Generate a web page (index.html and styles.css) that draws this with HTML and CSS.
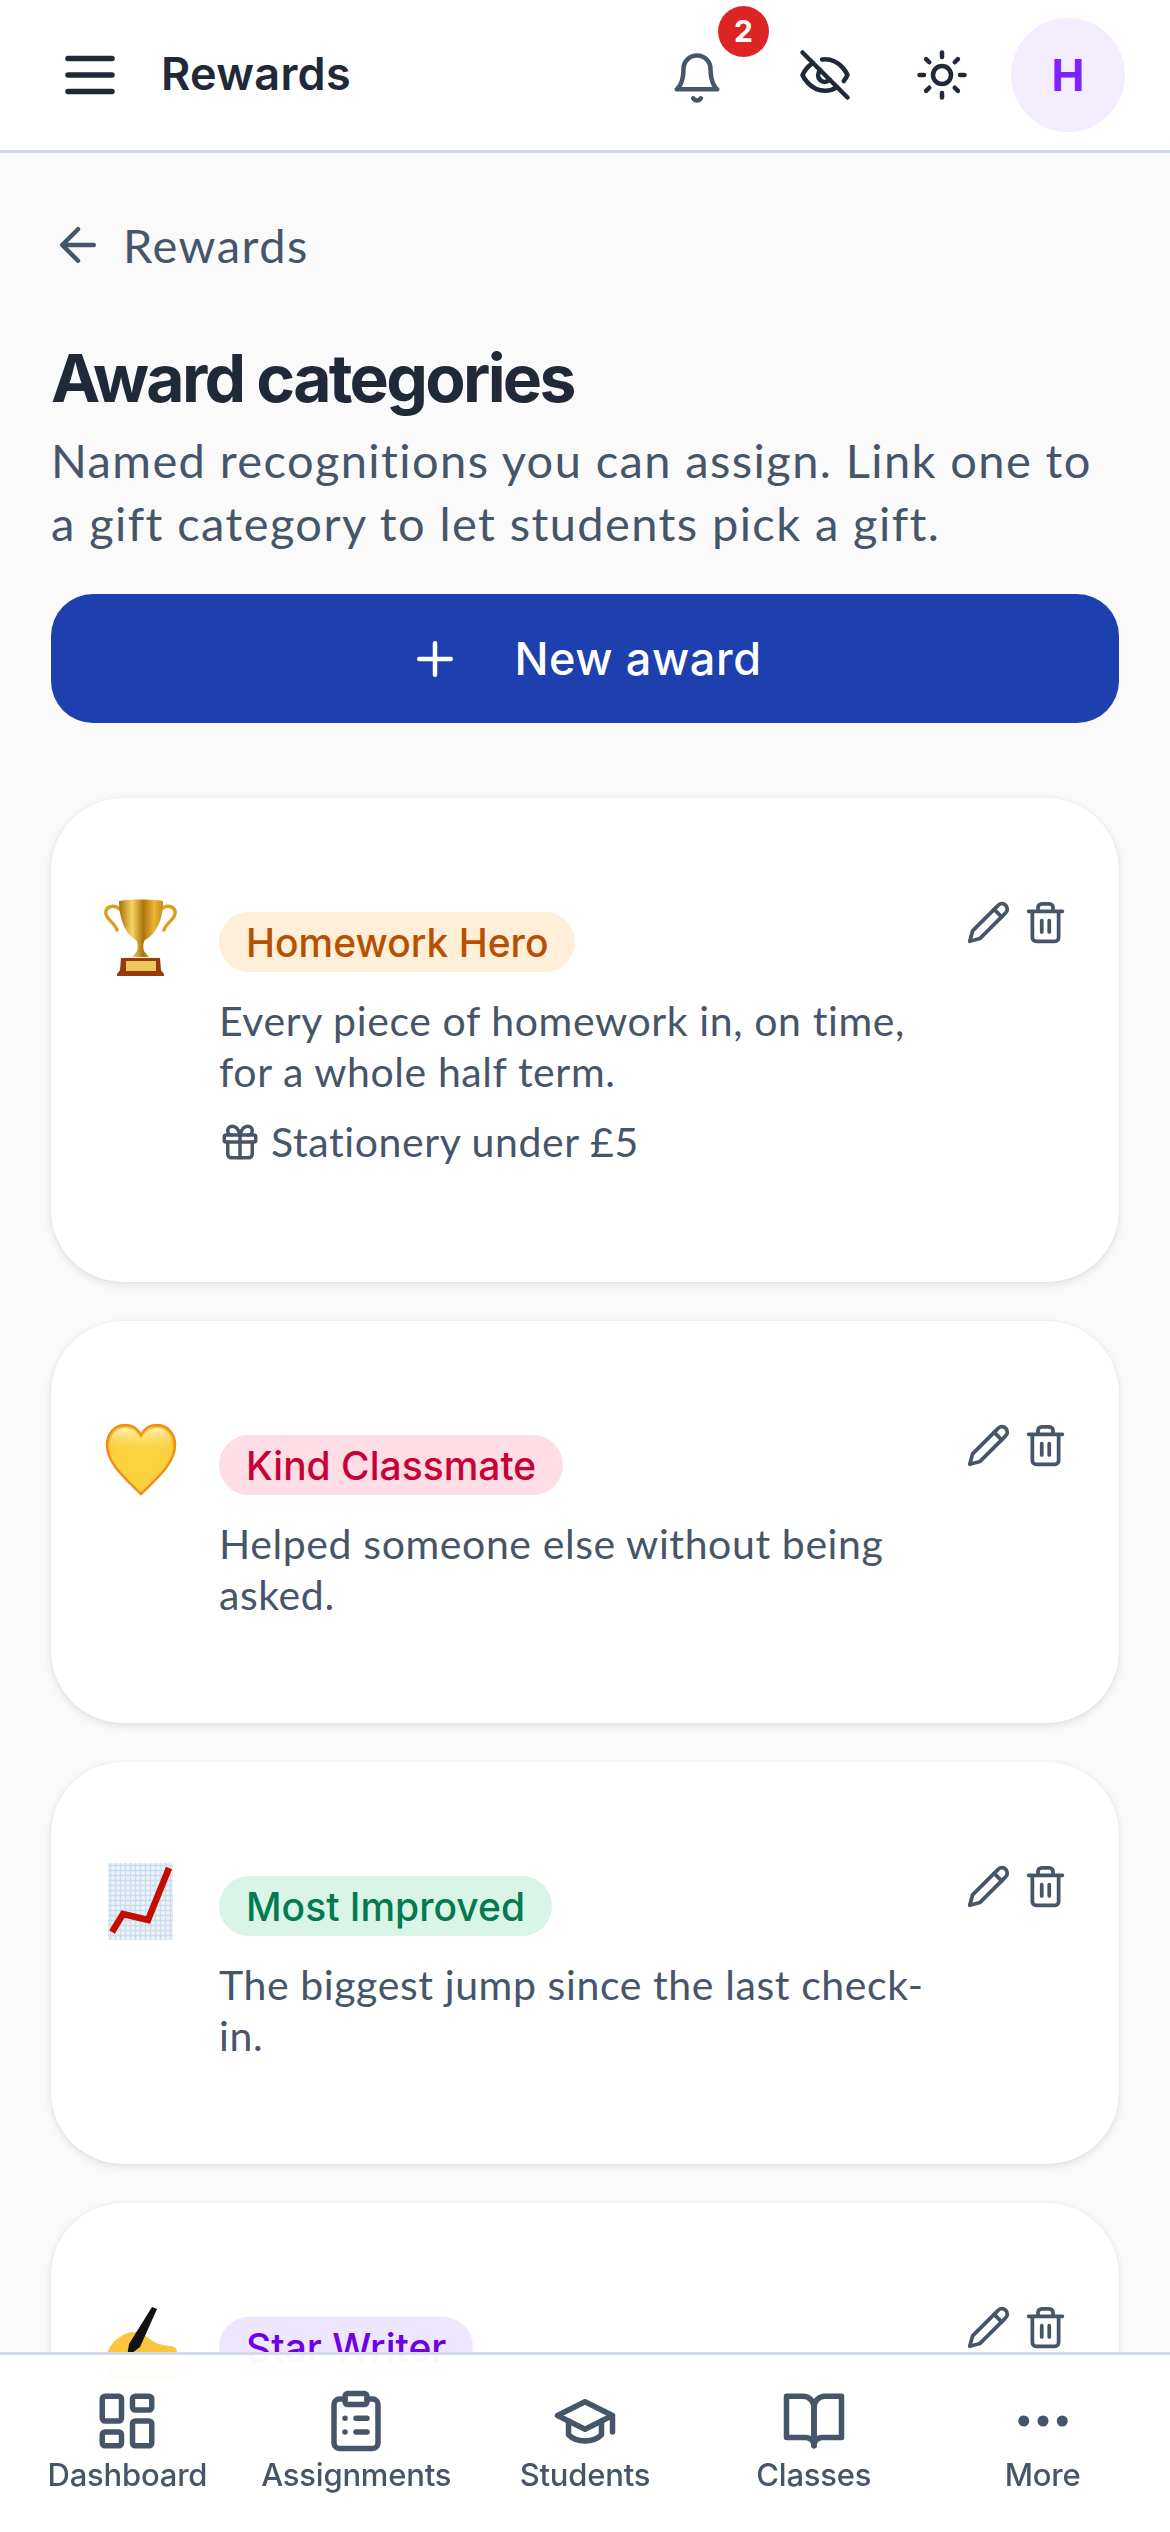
FILE: index.html
```html
<!DOCTYPE html>
<html lang="en">

<head>
    <meta charset="UTF-8">
    <meta name="viewport" content="width=device-width, initial-scale=1.0">
    <title>Award categories</title>
    <link rel="stylesheet" href="styles.css">
</head>

<body>

    <!-- Top bar -->
    <header class="topbar">
        <svg class="icon icon-menu" viewBox="0 0 24 24"><path d="M4 6h16M4 12h16M4 18h16"/></svg>
        <h1 class="topbar-title">Rewards</h1>
        <div class="bell">
            <svg class="icon icon-top" viewBox="0 0 24 24"><path d="M6 8a6 6 0 0 1 12 0c0 7 3 9 3 9H3s3-2 3-9"/><path d="M10.3 21a1.94 1.94 0 0 0 3.4 0"/></svg>
            <span class="badge">2</span>
        </div>
        <svg class="icon icon-top icon-dark eye" viewBox="0 0 24 24"><path d="M9.88 9.88a3 3 0 1 0 4.24 4.24"/><path d="M10.73 5.08A10.43 10.43 0 0 1 12 5c7 0 10 7 10 7a13.16 13.16 0 0 1-1.67 2.68"/><path d="M6.61 6.61A13.526 13.526 0 0 0 2 12s3 7 10 7a9.74 9.74 0 0 0 5.39-1.61"/><path d="M2 2l20 20"/></svg>
        <svg class="icon icon-top icon-dark sun" viewBox="0 0 24 24"><circle cx="12" cy="12" r="4"/><path d="M12 2v2M12 20v2M4.93 4.93l1.41 1.41M17.66 17.66l1.41 1.41M2 12h2M20 12h2M6.34 17.66l-1.41 1.41M19.07 4.93l-1.41 1.41"/></svg>
        <div class="avatar">H</div>
    </header>

    <main class="page">
        <a class="back" href="#">
            <svg class="icon icon-back" viewBox="0 0 24 24"><path d="M19 12H5M12 19l-7-7 7-7"/></svg>
            Rewards
        </a>

        <h2 class="page-title">Award categories</h2>
        <p class="page-sub">Named recognitions you can assign. Link one to<br>a gift category to let students pick a gift.</p>

        <button class="new-btn">
            <svg class="icon icon-plus" viewBox="0 0 24 24"><path d="M5 12h14M12 5v14"/></svg>
            New award
        </button>

        <!-- Homework Hero -->
        <section class="card">
            <div class="emoji">
                <svg viewBox="0 0 73 77" width="73" height="77">
                    <defs>
                        <linearGradient id="gold" x1="0" x2="1" y1="0" y2="0">
                            <stop offset="0" stop-color="#a86f0c"/>
                            <stop offset="0.3" stop-color="#f7d560"/>
                            <stop offset="0.55" stop-color="#a9740c"/>
                            <stop offset="0.8" stop-color="#e9b535"/>
                            <stop offset="1" stop-color="#c58d16"/>
                        </linearGradient>
                    </defs>
                    <path d="M17 11C9 4 1 8 2 15c1 6 9 9 11 16M56 11c8-7 16-3 15 4-1 6-9 9-11 16" fill="none" stroke="#d9a024" stroke-width="3.5" stroke-linecap="round"/>
                    <path d="M15 2c12-2 31-2 44 0 0 16-5 32-18 39-2 2-2 8-1 11l5 6H28l5-6c1-3 1-9-1-11C20 34 15 18 15 2z" fill="url(#gold)"/>
                    <path d="M17 59h39l1 12 3 4v2H13v-2l3-4z" fill="#96390b"/>
                    <rect x="22" y="62" width="30" height="10" fill="#eec85a"/>
                </svg>
            </div>
            <div class="card-body">
                <span class="tag tag-orange">Homework Hero</span>
                <p class="desc">Every piece of homework in, on time,<br>for a whole half term.</p>
                <div class="gift">
                    <svg class="icon icon-gift" viewBox="0 0 24 24"><rect x="3" y="8" width="18" height="4" rx="1"/><path d="M12 8v13"/><path d="M19 12v7a2 2 0 0 1-2 2H7a2 2 0 0 1-2-2v-7"/><path d="M7.5 8a2.5 2.5 0 0 1 0-5A4.8 8 0 0 1 12 8a4.8 8 0 0 1 4.5-5 2.5 2.5 0 0 1 0 5"/></svg>
                    Stationery under £5
                </div>
            </div>
            <div class="actions">
                <svg class="icon icon-action" viewBox="0 0 24 24"><path d="M17 3a2.85 2.83 0 1 1 4 4L7.5 20.5 2 22l1.5-5.5Z"/><path d="M15 5l4 4"/></svg>
                <svg class="icon icon-action" viewBox="0 0 24 24"><path d="M3 6h18M19 6v14a2 2 0 0 1-2 2H7a2 2 0 0 1-2-2V6M8 6V4a2 2 0 0 1 2-2h4a2 2 0 0 1 2 2v2M10 11v6M14 11v6"/></svg>
            </div>
        </section>

        <!-- Kind Classmate -->
        <section class="card">
            <div class="emoji">
                <svg viewBox="0 0 72 72" width="72" height="72">
                    <defs>
                        <radialGradient id="heart" cx="0.5" cy="0.5" r="0.62">
                            <stop offset="0" stop-color="#fcd53f"/>
                            <stop offset="0.65" stop-color="#fbd03c"/>
                            <stop offset="1" stop-color="#f7b52a"/>
                        </radialGradient>
                        <linearGradient id="shine" x1="0" x2="0" y1="0" y2="1">
                            <stop offset="0" stop-color="#fff2b5"/>
                            <stop offset="1" stop-color="#fcd53f" stop-opacity="0"/>
                        </linearGradient>
                    </defs>
                    <path d="M36 70C22 56 2 40 2 21 2 9 10 1 20 1c7 0 13 4 16 10C39 5 45 1 52 1c10 0 18 8 18 20 0 19-20 35-34 49z" fill="url(#heart)" stroke="#ef8f1a" stroke-width="2.5"/>
                    <path d="M36 15C33 9 27 4 20 4 11 4 5 11 5 21c0 3 1 6 2 9h58c1-3 2-6 2-9 0-10-6-17-15-17-7 0-13 5-16 11z" fill="url(#shine)"/>
                </svg>
            </div>
            <div class="card-body">
                <span class="tag tag-pink">Kind Classmate</span>
                <p class="desc">Helped someone else without being<br>asked.</p>
            </div>
            <div class="actions">
                <svg class="icon icon-action" viewBox="0 0 24 24"><path d="M17 3a2.85 2.83 0 1 1 4 4L7.5 20.5 2 22l1.5-5.5Z"/><path d="M15 5l4 4"/></svg>
                <svg class="icon icon-action" viewBox="0 0 24 24"><path d="M3 6h18M19 6v14a2 2 0 0 1-2 2H7a2 2 0 0 1-2-2V6M8 6V4a2 2 0 0 1 2-2h4a2 2 0 0 1 2 2v2M10 11v6M14 11v6"/></svg>
            </div>
        </section>

        <!-- Most Improved -->
        <section class="card">
            <div class="emoji">
                <svg viewBox="0 0 65 77" width="65" height="77">
                    <defs>
                        <pattern id="grid" width="5" height="5" patternUnits="userSpaceOnUse">
                            <rect width="5" height="5" fill="#eef3f8"/>
                            <path d="M0 2.5h5M2.5 0v5" stroke="#c9dcee" stroke-width="1.4"/>
                        </pattern>
                    </defs>
                    <rect width="65" height="77" fill="url(#grid)"/>
                    <path d="M4 69L15 51l25 6 21-52" fill="none" stroke="#c40c00" stroke-width="6.5"/>
                </svg>
            </div>
            <div class="card-body">
                <span class="tag tag-green">Most Improved</span>
                <p class="desc">The biggest jump since the last check-<br>in.</p>
            </div>
            <div class="actions">
                <svg class="icon icon-action" viewBox="0 0 24 24"><path d="M17 3a2.85 2.83 0 1 1 4 4L7.5 20.5 2 22l1.5-5.5Z"/><path d="M15 5l4 4"/></svg>
                <svg class="icon icon-action" viewBox="0 0 24 24"><path d="M3 6h18M19 6v14a2 2 0 0 1-2 2H7a2 2 0 0 1-2-2V6M8 6V4a2 2 0 0 1 2-2h4a2 2 0 0 1 2 2v2M10 11v6M14 11v6"/></svg>
            </div>
        </section>

        <!-- Star Writer, cut off by the bottom nav -->
        <section class="card">
            <div class="emoji">
                <svg viewBox="0 0 73 77" width="73" height="77">
                    <path d="M2 56C3 44 10 34 24 29c6-2 13-1 19 4 7 6 14 8 22 9 5 0 8 2 8 6v29H2z" fill="#fcc53c"/>
                    <path d="M48 3l5 2-17 38-13 10 2-13z" fill="#111"/>
                </svg>
            </div>
            <div class="card-body">
                <span class="tag tag-purple">Star Writer</span>
            </div>
            <div class="actions">
                <svg class="icon icon-action" viewBox="0 0 24 24"><path d="M17 3a2.85 2.83 0 1 1 4 4L7.5 20.5 2 22l1.5-5.5Z"/><path d="M15 5l4 4"/></svg>
                <svg class="icon icon-action" viewBox="0 0 24 24"><path d="M3 6h18M19 6v14a2 2 0 0 1-2 2H7a2 2 0 0 1-2-2V6M8 6V4a2 2 0 0 1 2-2h4a2 2 0 0 1 2 2v2M10 11v6M14 11v6"/></svg>
            </div>
        </section>
    </main>

    <!-- Bottom nav -->
    <nav class="bottom-nav">
        <a class="nav-item" href="#">
            <svg class="icon icon-nav" viewBox="0 0 24 24"><rect x="3" y="3" width="7" height="9" rx="1"/><rect x="14" y="3" width="7" height="5" rx="1"/><rect x="14" y="12" width="7" height="9" rx="1"/><rect x="3" y="16" width="7" height="5" rx="1"/></svg>
            Dashboard
        </a>
        <a class="nav-item" href="#">
            <svg class="icon icon-nav" viewBox="0 0 24 24"><rect x="8" y="2" width="8" height="4" rx="1"/><path d="M16 4h2a2 2 0 0 1 2 2v14a2 2 0 0 1-2 2H6a2 2 0 0 1-2-2V6a2 2 0 0 1 2-2h2"/><path d="M12 11h4M12 16h4M8 11h.01M8 16h.01"/></svg>
            Assignments
        </a>
        <a class="nav-item" href="#">
            <svg class="icon icon-nav" viewBox="0 0 24 24"><path d="M22 10v6M2 10l10-5 10 5-10 5z"/><path d="M6 12v5c3 3 9 3 12 0v-5"/></svg>
            Students
        </a>
        <a class="nav-item" href="#">
            <svg class="icon icon-nav" viewBox="0 0 24 24"><path d="M2 3h6a4 4 0 0 1 4 4v14a3 3 0 0 0-3-3H2z"/><path d="M22 3h-6a4 4 0 0 0-4 4v14a3 3 0 0 1 3-3h7z"/></svg>
            Classes
        </a>
        <a class="nav-item" href="#">
            <svg class="icon icon-nav" viewBox="0 0 24 24"><circle cx="5" cy="12" r="1"/><circle cx="12" cy="12" r="1"/><circle cx="19" cy="12" r="1"/></svg>
            More
        </a>
    </nav>

</body>

</html>
```

FILE: styles.css
```css
* {
    margin: 0;
    padding: 0;
    box-sizing: border-box;
}

html, body {
    width: 1170px;
    height: 2532px;
    overflow: hidden;
    font-family: "Lato", sans-serif;
    background-color: #fafafa;
    color: #475569;
}

/* Icons */
.icon {
    display: block;
    flex: none;
    fill: none;
    stroke: #475569;
    stroke-linecap: round;
    stroke-linejoin: round;
    stroke-width: 2;
}

.icon-menu {
    width: 66px;
    height: 66px;
    stroke: #1f2937;
}

.icon-top {
    width: 54px;
    height: 54px;
}

.icon-dark {
    stroke: #1f2937;
}

.icon-back,
.icon-plus {
    width: 54px;
    height: 54px;
}

.icon-plus {
    stroke: #fff;
}

.icon-gift {
    width: 42px;
    height: 42px;
}

.icon-action {
    width: 45px;
    height: 45px;
}

.icon-nav {
    width: 66px;
    height: 66px;
}

/* Top bar */
.topbar {
    height: 153px;
    display: flex;
    align-items: center;
    padding: 0 45px 0 57px;
    background-color: #fff;
    border-bottom: 3px solid #d3dce6;
}

.topbar-title {
    margin-left: 38px;
    padding-bottom: 3px;
    flex: 1;
    font-family: "Inter", sans-serif;
    font-size: 45px;
    font-weight: 600;
    letter-spacing: 0.3px;
    color: #1f2937;
}

.bell {
    position: relative;
    margin-top: 6px;
}

.badge {
    position: absolute;
    top: -45px;
    left: 48px;
    width: 51px;
    height: 51px;
    border-radius: 50%;
    background-color: #dc2626;
    color: #fff;
    font-family: "Inter", sans-serif;
    font-size: 30px;
    font-weight: 700;
    line-height: 51px;
    text-align: center;
}

.eye {
    margin-left: 74px;
}

.sun {
    margin-left: 63px;
}

.avatar {
    margin-left: 42px;
    width: 114px;
    height: 114px;
    border-radius: 50%;
    background-color: #f3edff;
    color: #7e22ff;
    font-family: "Inter", sans-serif;
    font-size: 44px;
    font-weight: 700;
    line-height: 114px;
    text-align: center;
}

/* Page */
.page {
    padding: 65px 51px 0;
}

.back {
    display: flex;
    align-items: center;
    gap: 18px;
    height: 54px;
    font-size: 47px;
    letter-spacing: 1.5px;
    color: #475569;
    text-decoration: none;
}

.page-title {
    margin-top: 64px;
    font-family: "Inter", sans-serif;
    font-size: 66px;
    line-height: 84px;
    font-weight: 700;
    letter-spacing: -2.7px;
    color: #1f2937;
}

.page-sub {
    margin-top: 9px;
    font-size: 47px;
    letter-spacing: 1.4px;
    line-height: 63px;
    color: #475569;
}

.new-btn {
    margin-top: 39px;
    width: 100%;
    height: 129px;
    display: flex;
    align-items: center;
    justify-content: center;
    gap: 52px;
    border: none;
    border-radius: 42px;
    background-color: #1e40af;
    color: #fff;
    font-family: "Inter", sans-serif;
    font-size: 45px;
    font-weight: 500;
    letter-spacing: 0.6px;
}

/* Cards */
.card {
    margin-top: 39px;
    display: flex;
    align-items: flex-start;
    padding: 98px 51px 103px 48px;
    background-color: #fff;
    border-radius: 72px;
    box-shadow: 0 3px 9px rgba(0, 0, 0, 0.1), 0 0 3px rgba(0, 0, 0, 0.05);
}

.new-btn + .card {
    margin-top: 75px;
}

.emoji {
    width: 83px;
    height: 78px;
    margin: 2px 37px 0 0;
    flex: none;
    display: flex;
    justify-content: center;
    align-items: center;
}

.emoji svg {
    display: block;
    flex: none;
}

.card-body {
    flex: 1;
    padding-top: 16px;
}

.tag {
    display: inline-block;
    height: 60px;
    padding: 0 27px;
    border-radius: 30px;
    font-family: "Inter", sans-serif;
    font-size: 39px;
    font-weight: 500;
    line-height: 62px;
}

.tag-orange {
    background-color: #ffefd9;
    color: #b94f00;
}

.tag-pink {
    background-color: #ffdde4;
    color: #c80036;
}

.tag-green {
    background-color: #d9f5e8;
    color: #047a4f;
}

.tag-purple {
    background-color: #eee6ff;
    color: #6d00e6;
}

.desc {
    margin-top: 23px;
    font-size: 41px;
    letter-spacing: 0.6px;
    line-height: 51px;
}

.gift {
    margin: 19px 0 12px;
    display: flex;
    align-items: center;
    gap: 10px;
    font-size: 41px;
    letter-spacing: 0.6px;
    line-height: 51px;
}

.actions {
    display: flex;
    gap: 12px;
    margin-top: 4px;
}

/* Bottom nav */
.bottom-nav {
    position: fixed;
    left: 0;
    bottom: 0;
    width: 1170px;
    height: 180px;
    display: flex;
    padding: 33px 13px 0;
    background-color: rgba(255, 255, 255, 0.97);
    border-top: 3px solid #d3dce6;
}

.nav-item {
    flex: 1;
    display: flex;
    flex-direction: column;
    align-items: center;
    font-family: "Inter", sans-serif;
    font-size: 31px;
    font-weight: 500;
    letter-spacing: -0.2px;
    line-height: 42px;
    color: #475569;
    text-decoration: none;
}
```
